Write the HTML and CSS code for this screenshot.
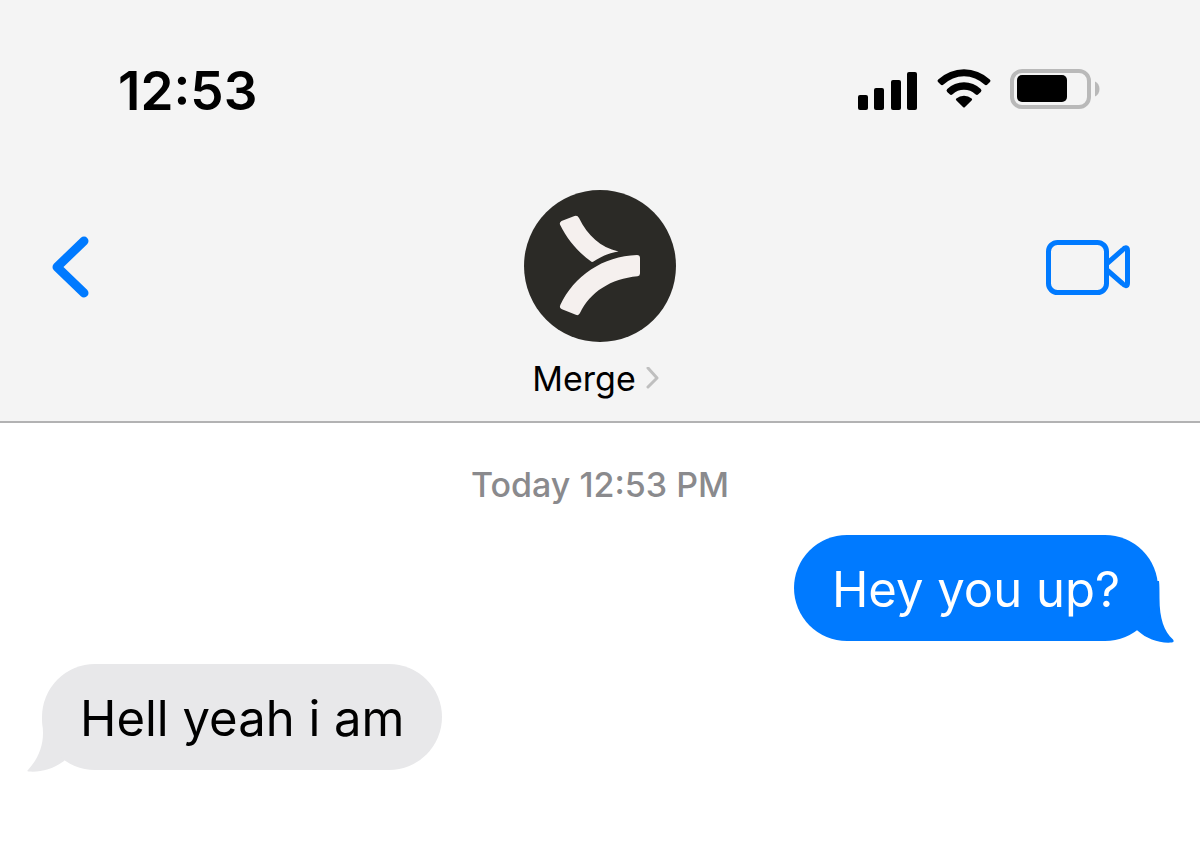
FILE: index.html
```html
<!DOCTYPE html>
<html lang="en">
<head>
    <meta charset="UTF-8">
    <meta name="viewport" content="width=device-width, initial-scale=1.0">
    <title>Merge</title>
    <link rel="stylesheet" href="styles.css">
</head>
<body>
    <header class="header">
        <div class="status-bar">
            <time class="clock">12:53</time>
            <div class="status-icons">
                <svg class="signal" width="60" height="42" viewBox="0 0 60 42" aria-hidden="true">
                    <rect x="0" y="26" width="10" height="15" rx="2"/>
                    <rect x="16" y="19" width="10" height="22" rx="2"/>
                    <rect x="33" y="11" width="10" height="30" rx="2"/>
                    <rect x="49" y="3" width="10" height="38" rx="2"/>
                </svg>
                <svg class="wifi" width="54" height="42" viewBox="0 1 54 42" aria-hidden="true">
                    <path d="M1.2 11.4Q-.2 12.8 1.3 14.2L3.6 16.6Q5 18 6.5 16.6A29.5 29.5 0 0 1 47.5 16.6Q49 18 50.4 16.6L52.7 14.2Q54.2 12.8 52.8 11.4A38 38 0 0 0 1.2 11.4Z"/>
                    <path d="M10.2 21Q8.8 22.5 10.2 23.9L12.7 26.3Q14 27.5 15.6 26.2A17 17 0 0 1 38.4 26.2Q40 27.5 41.3 26.3L43.8 23.9Q45.2 22.5 43.8 21A24.5 24.5 0 0 0 10.2 21Z"/>
                    <path d="M19.3 30.4Q18.3 31.4 19.4 32.5L26 39.1Q27 40.1 28 39.1L34.6 32.5Q35.7 31.4 34.7 30.4A12.5 12.5 0 0 0 19.3 30.4Z"/>
                </svg>
                <svg class="battery" width="90" height="42" viewBox="0 1 90 42" aria-hidden="true">
                    <rect class="battery-shell" x="2" y="3" width="77" height="36" rx="10"/>
                    <rect x="7" y="7" width="50" height="27" rx="5"/>
                    <path class="battery-cap" d="M85 13.5C91 16 91 26 85 28.5Z"/>
                </svg>
            </div>
        </div>
        <nav class="chat-nav">
            <button class="nav-button" type="button" aria-label="Back">
                <svg width="38" height="62" viewBox="0 0 38 62">
                    <path class="back-arrow" d="M33 5L6 31L33 57"/>
                </svg>
            </button>
            <div class="contact">
                <svg class="avatar" width="152" height="152" viewBox="0 0 152 152" role="img" aria-label="Merge logo">
                    <circle cx="76" cy="76" r="76"/>
                    <path class="avatar-mark" d="M37.5 31L50.5 26Q53.5 25 55 28C64 46 76 57 94.5 61.5C85 63 76 67 69.5 71.5Q68 72.5 66.5 71C54 62 43 49 36.2 35Q35 32.5 37.5 31Z"/>
                    <path class="avatar-mark" d="M113 65Q116 65 116 68V83.5Q116 86 113.5 86.2C87 88.5 66 102 56 123Q54.700 126 51.8 124.8L38 119.3Q35 118 36.3 115C50 86 79 66 113 65Z"/>
                </svg>
                <a class="contact-name" href="#">
                    Merge
                    <svg width="14" height="24" viewBox="0 0 14 24" aria-hidden="true">
                        <path class="name-arrow" d="M2 1L11 11L2 20"/>
                    </svg>
                </a>
            </div>
            <button class="nav-button video-button" type="button" aria-label="Video call">
                <svg class="video" width="86" height="58" viewBox="0 0 86 58">
                    <rect x="2.5" y="4.500" width="58" height="50" rx="9"/>
                    <path d="M61 25.5L76.5 12C79 9 81.500 9 81.500 12.5V45C81.500 48.500 79 48.500 76.5 45.500L61 32"/>
                </svg>
            </button>
        </nav>
    </header>
    <main class="chat">
        <p class="timestamp">Today 12:53 PM</p>
        <div class="bubble sent">
            Hey you up?
            <svg class="tail" width="60" height="64" viewBox="0 0 60 64" aria-hidden="true">
                <path d="M12 0H45C45.500 4 45.500 10 45.500 17C45.500 38 50 50 59 58.5C60 60 60 61 58 61.5C45 62.5 33 58 24 50C17 45 12 30 12 20Z"/>
            </svg>
        </div>
        <div class="bubble received">
            Hell yeah i am
            <svg class="tail" width="60" height="64" viewBox="0 0 60 64" aria-hidden="true">
                <path d="M48 8H16C16 12 17 18 17 23C17 38 11 50 2 60C1 61 1 61.5 2.5 61.5C15 62.5 27 59 38 51C44 45 48 30 48 20Z"/>
            </svg>
        </div>
    </main>
</body>
</html>
```

FILE: styles.css
```css
* {
    margin: 0;
    padding: 0;
    box-sizing: border-box;
}

body {
    min-height: 100vh;
    background: #fff;
    color: #000;
    font-family: Inter, "Liberation Sans", sans-serif;
}

.header {
    background: #f4f4f4;
    border-bottom: 2px solid #b2b2b3;
    padding: 60px 0 21px;
}

.status-bar {
    display: flex;
    justify-content: space-between;
    align-items: center;
    height: 60px;
    padding: 0 100px 0 118px;
}

.clock {
    padding-top: 2px;
    font-size: 53px;
    font-weight: 600;
    line-height: 60px;
}

.status-icons {
    display: flex;
    align-items: center;
    gap: 19px;
}

.battery-shell {
    fill: none;
    stroke: #b9b9b9;
    stroke-width: 4;
}

.battery-cap {
    fill: #b9b9b9;
}

.chat-nav {
    display: grid;
    grid-template-columns: 1fr auto 1fr;
    align-items: start;
    padding: 0 51px;
    margin-top: 70px;
}

.nav-button {
    display: flex;
    align-items: center;
    height: 154px;
    border: none;
    background: none;
    cursor: pointer;
}

.video-button {
    justify-self: end;
    margin-right: 17px;
}

.back-arrow {
    fill: none;
    stroke: #007aff;
    stroke-width: 9;
    stroke-linecap: round;
    stroke-linejoin: round;
}

.video {
    fill: none;
    stroke: #007aff;
    stroke-width: 5;
}

.contact {
    display: flex;
    flex-direction: column;
    align-items: center;
    gap: 16px;
}

.avatar {
    fill: #2b2a26;
}

.avatar .avatar-mark {
    fill: #f5f0ee;
}

.contact-name {
    display: flex;
    align-items: center;
    gap: 10px;
    padding-right: 8px;
    color: #000;
    font-size: 34px;
    line-height: 42px;
    text-decoration: none;
}

.name-arrow {
    fill: none;
    stroke: #bfbfbf;
    stroke-width: 3;
    stroke-linecap: round;
    stroke-linejoin: round;
}

.chat {
    display: flex;
    flex-direction: column;
    padding: 42px 42px 40px;
}

.timestamp {
    margin-bottom: 30px;
    color: #8a8a8d;
    font-size: 34px;
    font-weight: 500;
    line-height: 40px;
    text-align: center;
}

.bubble {
    position: relative;
    padding: 25px 38px 21px;
    border-radius: 53px;
    font-size: 49px;
    line-height: 60px;
}

.sent {
    align-self: flex-end;
    background: #007aff;
    color: #fff;
}

.received {
    align-self: flex-start;
    margin-top: 23px;
    background: #e8e8ea;
}

.tail {
    position: absolute;
    bottom: -4px;
    z-index: -1;
}

.sent .tail {
    right: -16px;
    fill: #007aff;
}

.received .tail {
    left: -16px;
    fill: #e8e8ea;
}
```
